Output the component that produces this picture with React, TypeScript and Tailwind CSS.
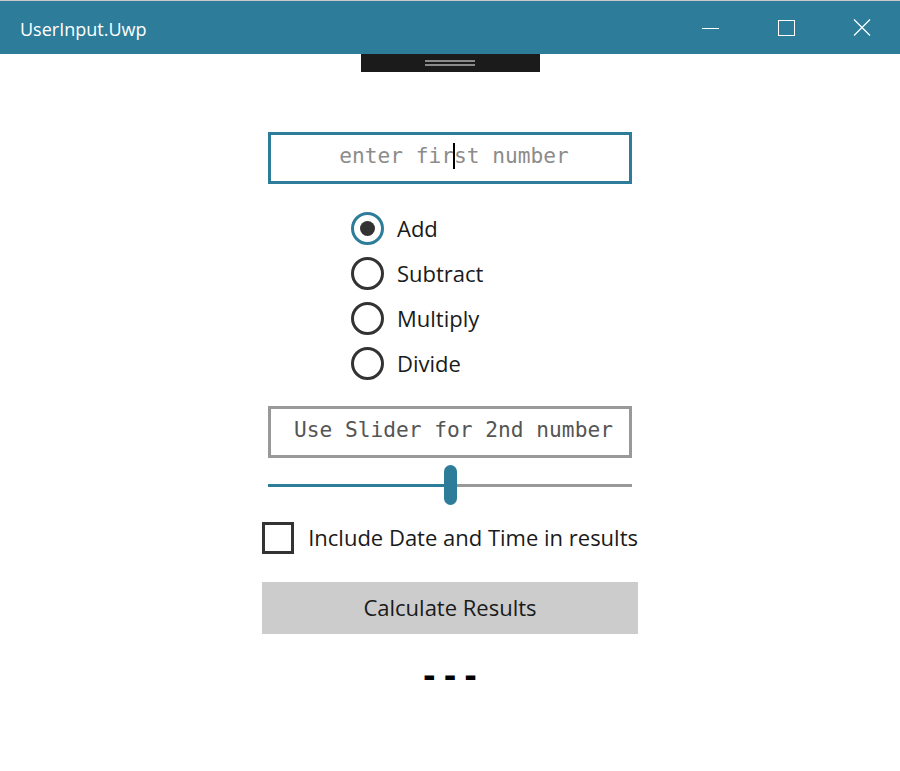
import { useState } from 'react';

const ops = ['Add', 'Subtract', 'Multiply', 'Divide'];

export default function App() {
  const [op, setOp] = useState('Add');
  const [withDate, setWithDate] = useState(false);

  return (
    <div className="w-[900px] h-[771px] bg-white overflow-hidden font-['Open_Sans',sans-serif] text-[#1a1a1a]">
      {/* Title bar */}
      <div className="h-[54px] border-t border-[#c9c9c9] bg-[#2d7d9a] flex items-center text-white">
        <div className="pl-[20px] text-[18px] flex-1 mt-[3px]">UserInput.Uwp</div>
        <div className="flex items-center h-full">
          <div className="w-[76px] h-full flex items-center justify-center">
            <div className="w-[17px] h-[1px] bg-white mt-[1px]" />
          </div>
          <div className="w-[76px] h-full flex items-center justify-center">
            <div className="w-[17px] h-[16px] border border-white" />
          </div>
          <div className="w-[76px] h-full flex items-center justify-center">
            <svg width="18" height="17" viewBox="0 0 18 17" fill="none" stroke="white" strokeWidth="1.2">
              <path d="M1 0.5 L17 16.5 M17 0.5 L1 16.5" />
            </svg>
          </div>
        </div>
      </div>

      <div className="flex flex-col items-center">
        {/* debug toolbar handle */}
        <div className="w-[179px] h-[18px] bg-[#1b1b1b] flex flex-col items-center justify-center gap-[2px]">
          <div className="w-[50px] h-[2px] bg-[#8a8a8a]" />
          <div className="w-[50px] h-[2px] bg-[#8a8a8a]" />
        </div>

        {/* first number */}
        <div className="mt-[60px] w-[364px] h-[52px] border-[3px] border-[#2d7d9a] flex items-center justify-center pl-[8px] pb-[4px] font-['DejaVu_Sans_Mono',monospace] text-[21.2px] text-[#8c8c8c]">
          <span>enter fir</span>
          <span className="w-[2px] h-[26px] bg-black -mx-[1px]" />
          <span>st number</span>
        </div>

        {/* operations */}
        <div className="mt-[22px] w-[198px] flex flex-col">
          {ops.map((o) => (
            <label key={o} className="h-[45px] flex items-center gap-[13px] cursor-pointer" onClick={() => setOp(o)}>
              <span
                className={`w-[33px] h-[33px] rounded-full border-[3px] flex items-center justify-center ${
                  op === o ? 'border-[#2d7d9a]' : 'border-[#333333]'
                }`}
              >
                {op === o && <span className="w-[15px] h-[15px] rounded-full bg-[#333333]" />}
              </span>
              <span className="text-[22px] leading-none -mt-[2px]">{o}</span>
            </label>
          ))}
        </div>

        {/* second number */}
        <div className="mt-[20px] w-[364px] h-[52px] border-[3px] border-[#999999] flex items-center pl-[23px] pb-[4px] font-['DejaVu_Sans_Mono',monospace] text-[21.2px] text-[#555555]">
          Use Slider for 2nd number
        </div>

        {/* slider */}
        <div className="mt-[7px] w-[364px] h-[40px] flex items-center">
          <div className="w-[176px] h-[3px] bg-[#2d7d9a]" />
          <div className="w-[13px] h-[40px] rounded-full bg-[#2d7d9a]" />
          <div className="flex-1 h-[3px] bg-[#999999]" />
        </div>

        {/* date/time */}
        <label className="mt-[17px] w-[376px] flex items-center gap-[14px] cursor-pointer" onClick={() => setWithDate(!withDate)}>
          <span className="w-[33px] h-[32px] border-[3px] border-[#333333] flex items-center justify-center text-[#333333]">
            {withDate ? '✓' : ''}
          </span>
          <span className="text-[22px] leading-none -mt-[2px] whitespace-nowrap">Include Date and Time in results</span>
        </label>

        <button className="mt-[28px] w-[376px] h-[52px] bg-[#cccccc] text-[22px] text-[#1a1a1a] flex items-center justify-center">
          <span className="-mt-[2px]">Calculate Results</span>
        </button>

        <div className="mt-[22px] pl-[9px] text-[36px] font-bold leading-none tracking-[9px] text-black">---</div>
      </div>
    </div>
  );
}
